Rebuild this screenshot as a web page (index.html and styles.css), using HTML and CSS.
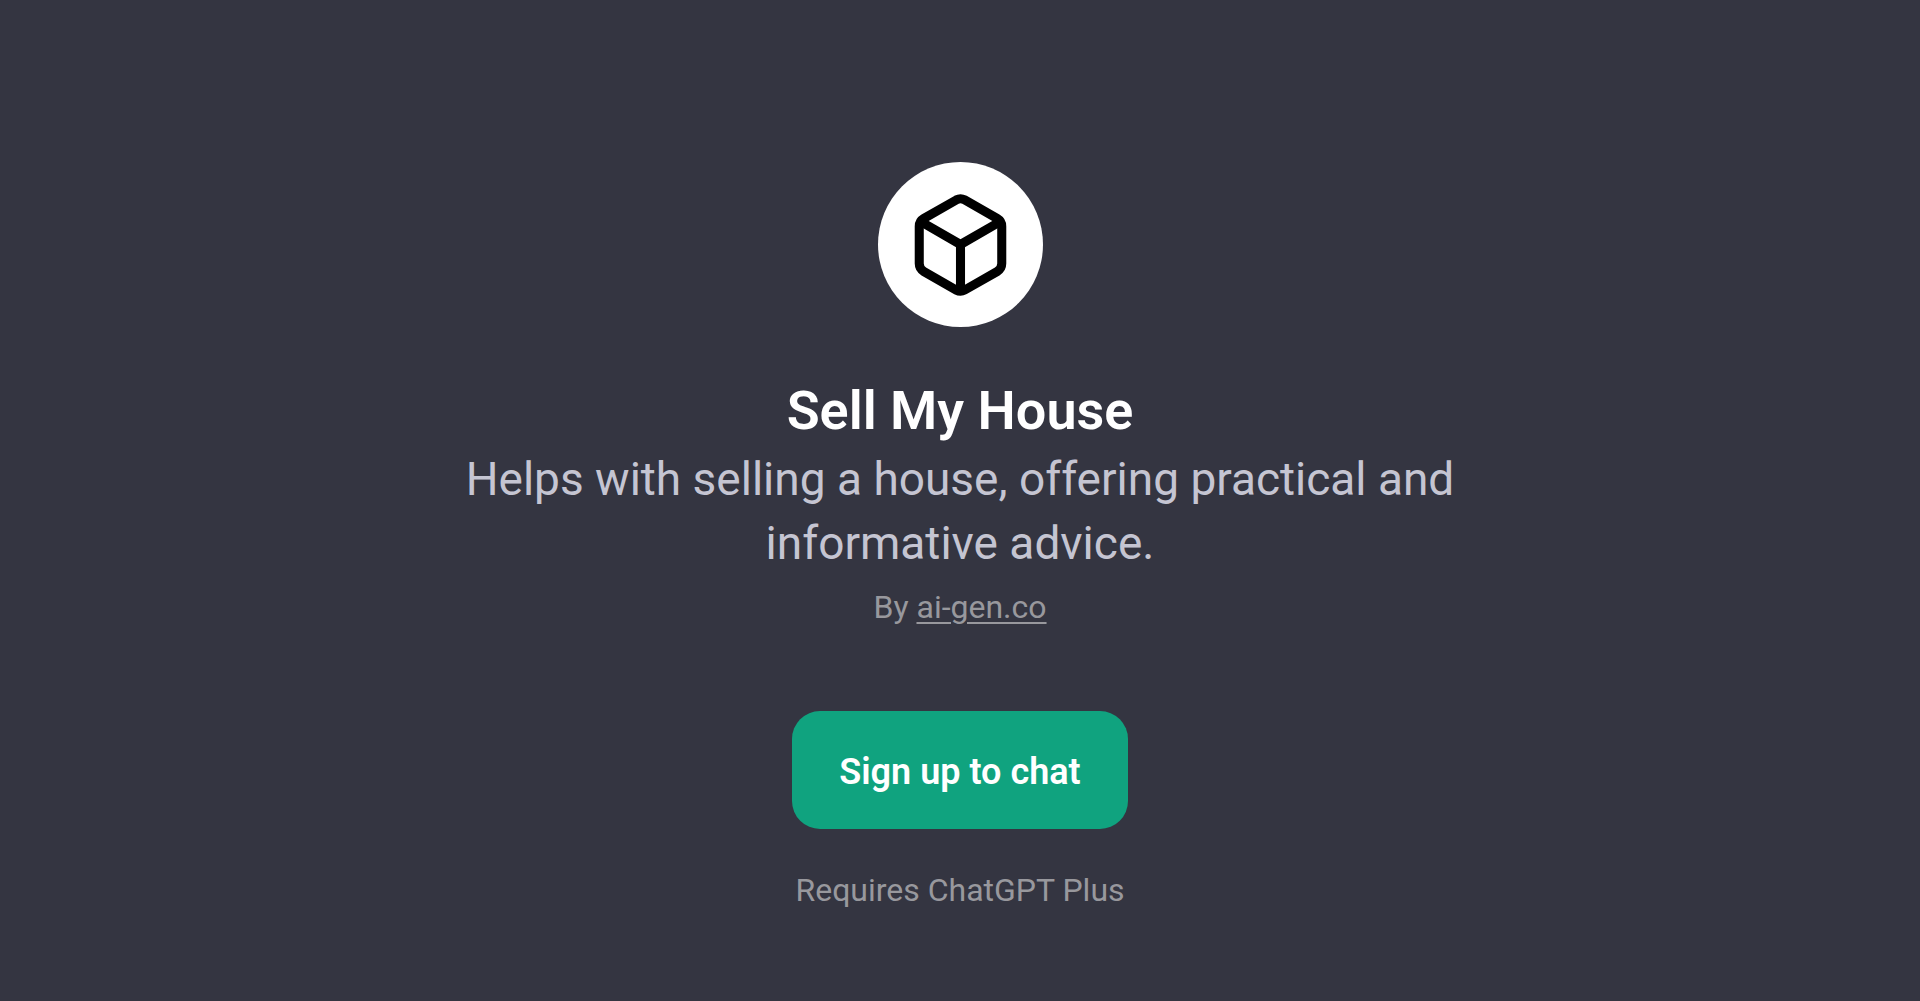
FILE: index.html
```
<!DOCTYPE html>
<html lang="en">
<head>
    <meta charset="UTF-8">
    <meta name="viewport" content="width=device-width, initial-scale=1.0">
    <title>Sell My House</title>
    <link rel="stylesheet" href="styles.css">
</head>
<body>
    <main class="page">
        <div class="logo">
            <svg viewBox="0 0 164 164" fill="none" stroke="#000" stroke-width="9" stroke-linejoin="round" aria-hidden="true">
                <path d="M78 37.600Q82 35.400 86 37.600L118.500 56.200Q123 58.800 123 64V101Q123 106.200 118.500 108.800L86 127.400Q82 129.600 78 127.400L45.500 108.800Q41 106.200 41 101V64Q41 58.800 45.500 56.200Z"/>
                <path d="M43 59.500L82 82L121 59.500M82 82V128"/>
            </svg>
        </div>
        <h1>Sell My House</h1>
        <p class="description">Helps with selling a house, offering practical and informative advice.</p>
        <p class="author">By <a href="https://ai-gen.co">ai-gen.co</a></p>
        <button type="button" class="signup">Sign up to chat</button>
        <p class="note">Requires ChatGPT Plus</p>
    </main>
</body>
</html>
```
FILE: styles.css
```
body {
    margin: 0;
    font-family: Roboto, "Liberation Sans", sans-serif;
    background-color: #343541;
    color: #ffffff;
}
.page {
    display: flex;
    flex-direction: column;
    align-items: center;
    padding: 162px 24px 80px;
    text-align: center;
}
.logo {
    width: 165px;
    height: 165px;
    border-radius: 50%;
    background-color: #ffffff;
}
.logo svg {
    display: block;
    width: 100%;
}
h1 {
    margin: 50px 0 2px;
    font-size: 54px;
    font-weight: 600;
    line-height: 68px;
}
p {
    margin: 0;
}
.description {
    max-width: 1024px;
    font-size: 46px;
    line-height: 64px;
    color: #c5c5d2;
}
.author, .note {
    font-size: 32px;
    line-height: 48px;
    color: #98989d;
}
.author {
    margin-top: 8px;
}
.author a {
    color: inherit;
    text-decoration-thickness: 2px;
    text-underline-offset: 4px;
}
.signup {
    margin-top: 80px;
    padding: 37px 47px 33px;
    border: none;
    border-radius: 28px;
    background-color: #10a37f;
    color: #ffffff;
    font-family: inherit;
    font-size: 36px;
    font-weight: 600;
    line-height: 48px;
    cursor: pointer;
}
.note {
    margin-top: 37px;
}
```
